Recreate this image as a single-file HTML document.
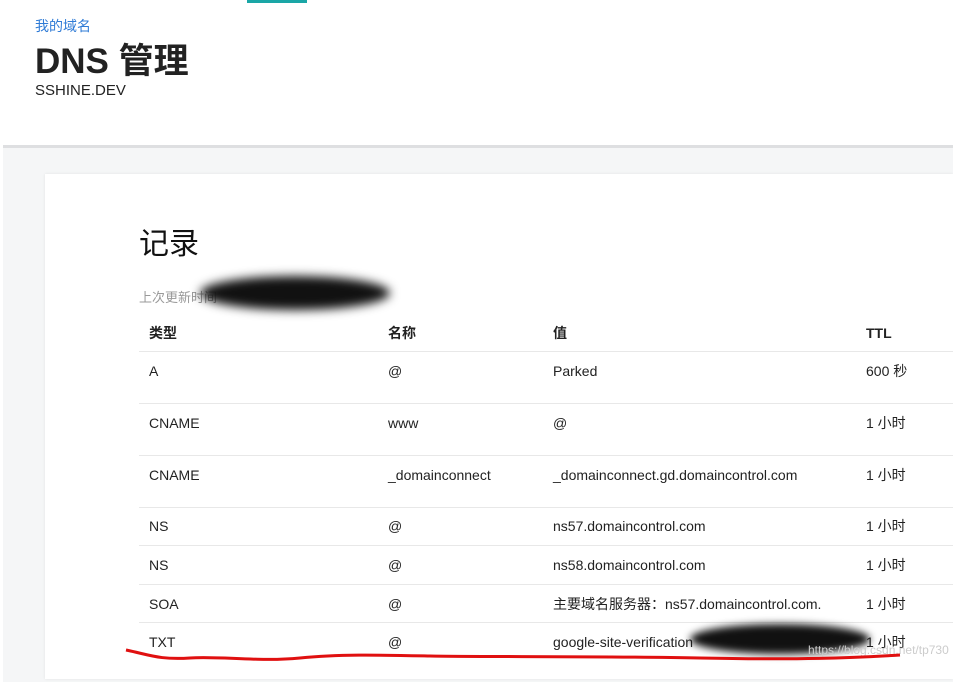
<!DOCTYPE html>
<html><head><meta charset="utf-8"><style>
body{margin:0;width:953px;height:679px;overflow:hidden;background:#fff;font-family:"Liberation Sans","Noto Sans CJK SC",sans-serif;color:#111;position:relative}
.a{position:absolute;white-space:nowrap}
.row{position:absolute;left:139px;width:814px;height:1px;background:#e8e8e8}
.c{position:absolute;font-size:14px;color:#222;white-space:nowrap;line-height:16px}
</style></head><body>
<div class="a" style="left:247px;top:0;width:60px;height:3px;background:#1aa6a6"></div>
<div class="a" style="left:35px;top:16px;font-size:14px;color:#2f7bd6">我的域名</div>
<div class="a" style="left:35px;top:39px;font-size:35px;font-weight:bold;color:#222;line-height:46px">DNS 管理</div>
<div class="a" style="left:35px;top:82px;font-size:15px;color:#222">SSHINE.DEV</div>
<div class="a" style="left:3px;top:145px;width:950px;height:534px;background:#f5f6f7;border-top:3px solid #dedfe1"></div>
<div class="a" style="left:45px;top:174px;width:908px;height:505px;background:#fff;box-shadow:0 0 3px rgba(0,0,0,.08)"></div>
<div class="a" style="left:139px;top:226px;font-size:30px;color:#111;line-height:38px">记录</div>
<div class="a" style="left:139px;top:287px;font-size:13px;color:#999">上次更新时间</div>
<div class="a" style="left:200px;top:276px;width:190px;height:34px;border-radius:50%;background:#111;filter:blur(5px)"></div>
<div class="c" style="left:149px;top:325px;font-weight:bold">类型</div>
<div class="c" style="left:388px;top:325px;font-weight:bold">名称</div>
<div class="c" style="left:553px;top:325px;font-weight:bold">值</div>
<div class="c" style="left:866px;top:325px;font-weight:bold">TTL</div>
<div class="row" style="top:351px"></div>
<div class="c" style="left:149px;top:363px">A</div><div class="c" style="left:388px;top:363px">@</div><div class="c" style="left:553px;top:363px">Parked</div><div class="c" style="left:866px;top:363px">600 秒</div>
<div class="row" style="top:403px"></div>
<div class="c" style="left:149px;top:415px">CNAME</div><div class="c" style="left:388px;top:415px">www</div><div class="c" style="left:553px;top:415px">@</div><div class="c" style="left:866px;top:415px">1 小时</div>
<div class="row" style="top:455px"></div>
<div class="c" style="left:149px;top:467px">CNAME</div><div class="c" style="left:388px;top:467px">_domainconnect</div><div class="c" style="left:553px;top:467px">_domainconnect.gd.domaincontrol.com</div><div class="c" style="left:866px;top:467px">1 小时</div>
<div class="row" style="top:507px"></div>
<div class="c" style="left:149px;top:518px">NS</div><div class="c" style="left:388px;top:518px">@</div><div class="c" style="left:553px;top:518px">ns57.domaincontrol.com</div><div class="c" style="left:866px;top:518px">1 小时</div>
<div class="row" style="top:545px"></div>
<div class="c" style="left:149px;top:557px">NS</div><div class="c" style="left:388px;top:557px">@</div><div class="c" style="left:553px;top:557px">ns58.domaincontrol.com</div><div class="c" style="left:866px;top:557px">1 小时</div>
<div class="row" style="top:584px"></div>
<div class="c" style="left:149px;top:596px">SOA</div><div class="c" style="left:388px;top:596px">@</div><div class="c" style="left:553px;top:596px">主要域名服务器：ns57.domaincontrol.com.</div><div class="c" style="left:866px;top:596px">1 小时</div>
<div class="row" style="top:622px"></div>
<div class="c" style="left:149px;top:634px">TXT</div><div class="c" style="left:388px;top:634px">@</div><div class="c" style="left:553px;top:634px">google-site-verification</div><div class="c" style="left:866px;top:634px">1 小时</div>
<div class="a" style="left:690px;top:624px;width:180px;height:30px;border-radius:50%;background:#111;filter:blur(4px)"></div>
<div class="a" style="left:808px;top:643px;font-size:12px;color:#ccc">https://blog.csdn.net/tp730</div>
<svg class="a" style="left:0;top:0" width="953" height="679"><path d="M126 650 C150 655 160 660 190 658 S260 662 300 658 S380 655 430 656 S600 656 700 658 S850 658 900 655" stroke="#e01010" stroke-width="3" fill="none"/></svg>
</body></html>
